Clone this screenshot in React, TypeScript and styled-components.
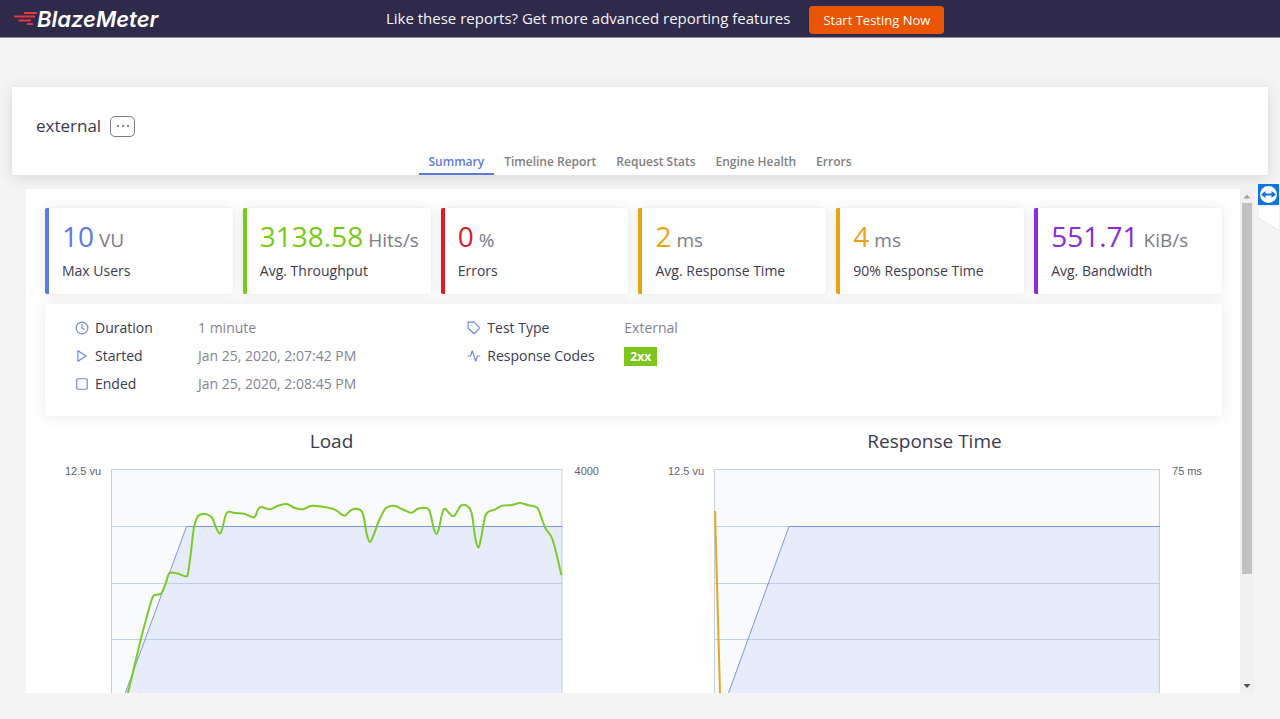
import React from "react";
import styled, { createGlobalStyle } from "styled-components";
import { FiActivity, FiClock, FiPlay, FiSquare, FiTag } from "react-icons/fi";

const GlobalStyle = createGlobalStyle`
  * { box-sizing: border-box; }
  body {
    margin: 0;
    background: #f4f4f4;
    color: #3b3a52;
    font-family: "Open Sans", sans-serif;
    font-size: 14px;
  }
  h1, h2, p, dl, dt, dd { margin: 0; font-weight: 400; }
  button { font-family: inherit; cursor: pointer; }
`;

const Page = styled.div`
  height: 100vh;
  display: flex;
  flex-direction: column;
  overflow: hidden;
`;

const TopBar = styled.header`
  flex: none;
  height: 38px;
  display: flex;
  align-items: center;
  padding: 0 108px 0 14px;
  background: #2f2a4a;
  border-bottom: 1px solid #8e8ba3;
`;

const Brand = styled.a`
  display: flex;
  align-items: center;
  color: #fff;
  text-decoration: none;
  font-family: Inter, sans-serif;
  font-size: 22px;
  line-height: 24px;
  font-weight: 600;
  font-style: italic;
`;

const Promo = styled.div`
  flex: 1;
  display: flex;
  align-items: center;
  justify-content: center;
  gap: 19px;
  color: #f4f3f8;
  font-size: 15px;
  line-height: 22px;
  white-space: nowrap;
`;

const PromoText = styled.span`
  padding-bottom: 2px;
`;

const PromoButton = styled.button`
  height: 28px;
  margin-top: 3px;
  padding: 0 14px;
  border: 0;
  border-radius: 4px;
  background: #ea5504;
  color: #fff;
  font-size: 13px;
  line-height: 20px;
`;

const ReportHeader = styled.section`
  flex: none;
  margin: 49px 12px 0;
  padding-top: 26px;
  background: #fff;
  box-shadow: 0 2px 14px rgba(50, 50, 80, 0.14);
`;

const TitleRow = styled.div`
  display: flex;
  align-items: center;
  gap: 9px;
  padding: 0 24px;
`;

const Title = styled.h1`
  font-size: 17px;
  line-height: 26px;
`;

const MoreButton = styled.button`
  width: 25px;
  height: 21px;
  display: flex;
  align-items: center;
  justify-content: center;
  padding: 0;
  border: 1px solid #7c7d84;
  border-radius: 5px;
  background: #fff;
`;

const Tabs = styled.nav`
  display: flex;
  justify-content: center;
  padding-top: 8px;
`;

const Tab = styled.a<{ $active?: boolean }>`
  height: 28px;
  padding: 6px 10px 0;
  border-bottom: 2px solid ${(p) => (p.$active ? "#5b7bd9" : "transparent")};
  color: ${(p) => (p.$active ? "#5b7bd9" : "#808080")};
  font-size: 12px;
  line-height: 18px;
  font-weight: 600;
  text-decoration: none;
`;

const Viewport = styled.main`
  flex: 1;
  min-height: 0;
  display: flex;
  margin: 14px 26px 26px;
`;

const Report = styled.div`
  flex: 1;
  min-width: 0;
  overflow-y: auto;
  scrollbar-width: none;
  padding: 19px 4px 40px;
  background: #fff;
`;

const Block = styled.div`
  padding: 0 14px 0 15px;
`;

const Cards = styled.div`
  display: grid;
  grid-template-columns: repeat(6, 1fr);
  gap: 10px;
`;

const Card = styled.div<{ $color: string }>`
  height: 86px;
  padding: 10px 0 0 13px;
  border-left: 4px solid ${(p) => p.$color};
  border-radius: 2px;
  background: #fff;
  box-shadow: 0 0 14px rgba(0, 0, 0, 0.09), 0 0 1px rgba(0, 0, 0, 0.16);
  white-space: nowrap;
`;

const Value = styled.p<{ $color: string }>`
  color: ${(p) => p.$color};
  font-size: 28px;
  line-height: 36px;
`;

const Unit = styled.span`
  margin-left: 5px;
  color: #7b7c88;
  font-size: 19px;
`;

const CardLabel = styled.p`
  margin-top: 3px;
  font-size: 14px;
  line-height: 20px;
`;

const Info = styled.div`
  height: 112px;
  margin-top: 10px;
  padding-top: 10px;
  display: grid;
  grid-template-columns: repeat(3, 1fr);
  background: #fff;
  box-shadow: 0 0 14px rgba(0, 0, 0, 0.09);
`;

const InfoColumn = styled.dl`
  padding-left: 30px;
`;

const InfoRow = styled.div`
  display: flex;
  align-items: center;
  height: 28px;
  line-height: 20px;
`;

const Term = styled.dt<{ $wide?: boolean }>`
  width: ${(p) => (p.$wide ? 157 : 123)}px;
  display: flex;
  align-items: center;
  gap: 6px;
  svg { color: #6b85e0; }
`;

const Detail = styled.dd`
  color: #83838f;
`;

const Badge = styled.span`
  display: block;
  padding: 0 6px;
  background: #7dc61e;
  color: #fff;
  font-size: 12px;
  line-height: 19px;
  font-weight: 700;
`;

const Charts = styled.div`
  display: grid;
  grid-template-columns: 1fr 1fr;
  padding-top: 12px;
`;

const ChartTitle = styled.h2`
  font-size: 19px;
  line-height: 26px;
  text-align: center;
`;

const ChartBody = styled.div`
  display: flex;
  padding: 15px 34px 0 35px;
`;

const AxisLabel = styled.span`
  color: #5f5f70;
  font-family: "Liberation Sans", Arial, sans-serif;
  font-size: 11px;
  line-height: 4px;
`;

const Plot = styled.svg`
  flex: 1;
  min-width: 0;
  height: 285px;
  margin: 0 12px 0 10px;
  display: block;
`;

const Scrollbar = styled.div`
  flex: none;
  width: 14px;
  display: flex;
  flex-direction: column;
  align-items: center;
  background: #f0f0f0;
`;

const ScrollArrow = styled.svg`
  flex: none;
  width: 14px;
  height: 14px;
`;

const ScrollTrack = styled.div`
  flex: 1;
  width: 10px;
`;

const ScrollThumb = styled.div`
  height: 78%;
  background: #c1c1c1;
`;

const RemoteTab = styled.button`
  position: fixed;
  top: 184px;
  right: 0;
  width: 22px;
  height: 48px;
  padding: 0;
  border: 0;
  background: none;
  svg { display: block; }
`;

type Point = [number, number];

const LOAD_HITS: Point[] = [
  [7, 262], [17, 223.7], [28, 177.7], [34, 154.3], [41.3, 129], [45.3, 125.7], [50.3, 124.3], [54.7, 114.3],
  [58.3, 104.3], [66.3, 104.5], [75, 107.5], [77, 104], [79.7, 84.3], [83, 57.7], [86.3, 48], [89.7, 45.5],
  [94.7, 45], [100.7, 48.3], [105.3, 59.3], [108.7, 64.7], [111.3, 59.3], [114, 48], [116.7, 43], [124.7, 44],
  [133, 44.7], [143, 48.4], [146.3, 41.7], [149.7, 38], [158.7, 40.3], [166.3, 37], [175.3, 35], [183, 38.7],
  [192, 40.3], [199.7, 36.9], [211.3, 37.7], [221.3, 39.7], [226, 42], [233.3, 46.7], [240.7, 40.6], [249, 41],
  [252.3, 47], [255.3, 64.3], [258.7, 73], [263, 64.3], [268, 51], [274.7, 39], [283, 36.7], [291.3, 40.3],
  [300.3, 43.7], [307.3, 39.5], [316.5, 39.5], [319.7, 47], [322.3, 59.3], [325, 65], [327.7, 59.3], [330.7, 45.3],
  [333.7, 39.7], [342, 47.3], [349.7, 36.6], [357, 38], [360.7, 46], [363.7, 67.7], [367, 78.7], [370, 67.7],
  [374.7, 45.3], [384, 40.3], [391.3, 36.6], [400.3, 36], [408.7, 33.9], [417, 36.3], [425.7, 38.6], [429.7, 47.7],
  [434, 59.3], [441.3, 71], [450, 106],
];
const LOAD_USERS: Point[] = [[0, 263], [75.5, 57.5], [451, 57.5]];
const RT_USERS: Point[] = [[0, 264], [75, 57.5], [446, 57.5]];
const RT_TIME: Point[] = [[1, 42], [6, 224], [8, 280]];

/* Catmull-Rom spline through the samples. */
function spline(points: Point[]): string {
  let d = `M${points[0].join(" ")}`;
  for (let i = 0; i < points.length - 1; i++) {
    const a = points[Math.max(i - 1, 0)];
    const b = points[i];
    const c = points[i + 1];
    const e = points[Math.min(i + 2, points.length - 1)];
    d += `C${b[0] + (c[0] - a[0]) / 6} ${b[1] + (c[1] - a[1]) / 6} ${c[0] - (e[0] - b[0]) / 6} ${c[1] - (e[1] - b[1]) / 6} ${c[0]} ${c[1]}`;
  }
  return d;
}

const line = (points: Point[]) => `M${points.map((p) => p.join(" ")).join("L")}`;

type ChartProps = {
  title: string;
  left: string;
  right: string;
  width: number;
  users: Point[];
  series: string;
  color: string;
};

function Chart({ title, left, right, width, users, series, color }: ChartProps) {
  return (
    <section>
      <ChartTitle>{title}</ChartTitle>
      <ChartBody>
        <AxisLabel>{left}</AxisLabel>
        <Plot viewBox={`0 0 ${width} 285`} preserveAspectRatio="none" role="img" aria-label={title}>
          <rect width={width} height="285" fill="#f9fafb" />
          <path d={`${line(users)}V285H0Z`} fill="#e6ecf9" />
          {[0.5, 57.5, 114.5, 170.5, 227.5, 284.5].map((y) => (
            <path key={y} d={`M0 ${y}H${width}`} stroke="#c0cfe3" vectorEffect="non-scaling-stroke" />
          ))}
          <path d={`M0.5 0V285M${width - 0.5} 0V285`} stroke="#c6cfe2" vectorEffect="non-scaling-stroke" />
          <path d={line(users)} fill="none" stroke="#7c96d6" vectorEffect="non-scaling-stroke" />
          <path d={series} fill="none" stroke={color} strokeWidth="2" vectorEffect="non-scaling-stroke" />
        </Plot>
        <AxisLabel>{right}</AxisLabel>
      </ChartBody>
    </section>
  );
}

const CARDS = [
  { value: "10", unit: "VU", label: "Max Users", color: "#5b7be0" },
  { value: "3138.58", unit: "Hits/s", label: "Avg. Throughput", color: "#78cb15" },
  { value: "0", unit: "%", label: "Errors", color: "#d52027" },
  { value: "2", unit: "ms", label: "Avg. Response Time", color: "#e8a313" },
  { value: "4", unit: "ms", label: "90% Response Time", color: "#e8a313" },
  { value: "551.71", unit: "KiB/s", label: "Avg. Bandwidth", color: "#8a2bd8" },
];

const TABS = ["Summary", "Timeline Report", "Request Stats", "Engine Health", "Errors"];

export default function App() {
  return (
    <Page>
      <GlobalStyle />
      <TopBar>
        <Brand href="#">
          <svg width="23" height="15" viewBox="0 0 23 15" stroke="#e0393e" strokeWidth="1.8" aria-hidden="true">
            <path d="M10 2H23M0 5.500H21M4.500 9.500H17M13 13H19" />
          </svg>
          BlazeMeter
        </Brand>
        <Promo>
          <PromoText>Like these reports? Get more advanced reporting features</PromoText>
          <PromoButton type="button">Start Testing Now</PromoButton>
        </Promo>
      </TopBar>

      <ReportHeader>
        <TitleRow>
          <Title>external</Title>
          <MoreButton type="button" aria-label="More actions">
            <svg width="12" height="2" viewBox="0 0 12 2" fill="#85858c">
              <rect width="2" height="2" />
              <rect x="5" width="2" height="2" />
              <rect x="10" width="2" height="2" />
            </svg>
          </MoreButton>
        </TitleRow>
        <Tabs>
          {TABS.map((t, i) => (
            <Tab key={t} href="#" $active={i === 0}>{t}</Tab>
          ))}
        </Tabs>
      </ReportHeader>

      <Viewport>
        <Report>
          <Block>
            <Cards>
              {CARDS.map((c) => (
                <Card key={c.label} $color={c.color}>
                  <Value $color={c.color}>
                    {c.value}
                    <Unit>{c.unit}</Unit>
                  </Value>
                  <CardLabel>{c.label}</CardLabel>
                </Card>
              ))}
            </Cards>
            <Info>
              <InfoColumn>
                <InfoRow>
                  <Term><FiClock size={14} />Duration</Term>
                  <Detail>1 minute</Detail>
                </InfoRow>
                <InfoRow>
                  <Term><FiPlay size={14} />Started</Term>
                  <Detail>Jan 25, 2020, 2:07:42 PM</Detail>
                </InfoRow>
                <InfoRow>
                  <Term><FiSquare size={14} />Ended</Term>
                  <Detail>Jan 25, 2020, 2:08:45 PM</Detail>
                </InfoRow>
              </InfoColumn>
              <InfoColumn>
                <InfoRow>
                  <Term $wide><FiTag size={14} />Test Type</Term>
                  <Detail>External</Detail>
                </InfoRow>
                <InfoRow>
                  <Term $wide><FiActivity size={14} />Response Codes</Term>
                  <Detail><Badge>2xx</Badge></Detail>
                </InfoRow>
              </InfoColumn>
            </Info>
          </Block>
          <Charts>
            <Chart title="Load" left="12.5 vu" right="4000" width={451} users={LOAD_USERS} series={spline(LOAD_HITS)} color="#7dc92b" />
            <Chart title="Response Time" left="12.5 vu" right="75 ms" width={446} users={RT_USERS} series={line(RT_TIME)} color="#e5a823" />
          </Charts>
        </Report>
        <Scrollbar>
          <ScrollArrow viewBox="0 0 14 14"><path d="M3.500 9.500L7 5.500L10.500 9.500Z" fill="#a3a3a3" /></ScrollArrow>
          <ScrollTrack><ScrollThumb /></ScrollTrack>
          <ScrollArrow viewBox="0 0 14 14"><path d="M3.500 5L7 9L10.500 5Z" fill="#505050" /></ScrollArrow>
        </Scrollbar>
      </Viewport>

      <RemoteTab type="button" aria-label="Remote session">
        <svg width="22" height="48" viewBox="0 0 22 48">
          <path d="M0 22V34L22 47V22Z" fill="#fff" stroke="#e6e6e6" />
          <rect width="21" height="21" fill="#0e73e0" />
          <circle cx="10.500" cy="10.500" r="8.500" fill="#fff" />
          <path d="M3 10.500L7.500 7V9.500H13.500V7L18 10.500L13.500 14V11.500H7.500V14Z" fill="#0e73e0" />
        </svg>
      </RemoteTab>
    </Page>
  );
}
